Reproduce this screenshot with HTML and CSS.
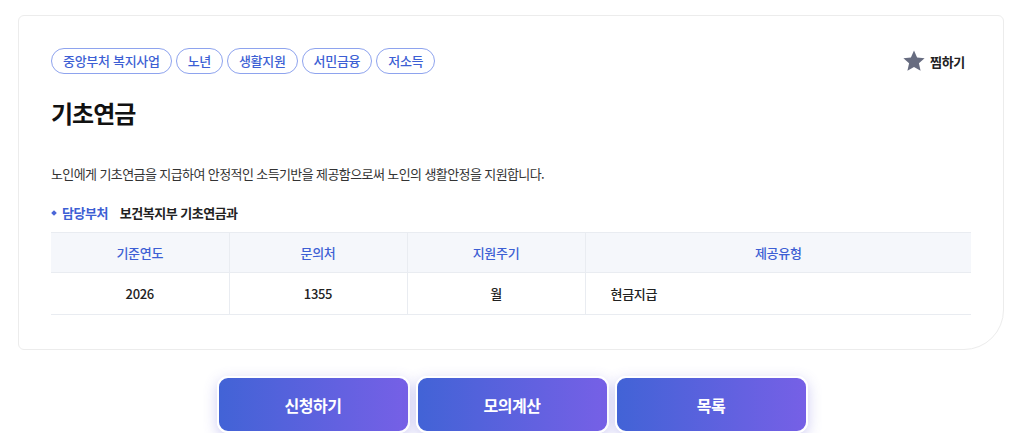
FILE: index.html
```html
<!DOCTYPE html>
<html lang="ko">
<head>
    <meta charset="UTF-8">
    <meta name="viewport" content="width=device-width, initial-scale=1.0">
    <title>기초연금</title>
    <link rel="stylesheet" href="styles.css">
</head>
<body>
    <div class="container">
        <div class="detail-card">
            <div class="card-top">
                <div class="tags">
                    <span class="tag">중앙부처 복지사업</span>
                    <span class="tag">노년</span>
                    <span class="tag">생활지원</span>
                    <span class="tag">서민금융</span>
                    <span class="tag">저소득</span>
                </div>
                <button class="fav-btn">
                    <svg class="star" viewBox="0 0 24 24" width="24" height="24">
                        <path d="M12 1.5l3.1 7 7.5.7-5.7 5 1.7 7.5L12 17.9l-6.6 3.8 1.7-7.5-5.7-5 7.5-.7z" fill="#676c80"/>
                    </svg>
                    찜하기
                </button>
            </div>

            <h1 class="title">기초연금</h1>

            <p class="desc">노인에게 기초연금을 지급하여 안정적인 소득기반을 제공함으로써 노인의 생활안정을 지원합니다.</p>

            <div class="dept">
                <span class="dept-label">담당부처</span>
                <span class="dept-value">보건복지부 기초연금과</span>
            </div>

            <table class="info-table">
                <thead>
                    <tr>
                        <th class="col-sm">기준연도</th>
                        <th class="col-sm">문의처</th>
                        <th class="col-sm">지원주기</th>
                        <th>제공유형</th>
                    </tr>
                </thead>
                <tbody>
                    <tr>
                        <td>2026</td>
                        <td>1355</td>
                        <td>월</td>
                        <td class="left">현금지급</td>
                    </tr>
                </tbody>
            </table>
        </div>

        <div class="actions">
            <button class="action-btn">신청하기</button>
            <button class="action-btn">모의계산</button>
            <button class="action-btn">목록</button>
        </div>
    </div>
</body>
</html>
```

FILE: styles.css
```css
* {
    margin: 0;
    padding: 0;
    box-sizing: border-box;
}

body {
    font-family: "Noto Sans CJK KR", "Noto Sans", sans-serif;
    background: #ffffff;
    color: #222;
}

.container {
    padding: 15px 20px 0 18px;
}

.detail-card {
    background: #fff;
    border: 1px solid #ececec;
    border-radius: 6px 6px 40px 6px;
    padding: 32px 32px 34px 32px;
}

.card-top {
    display: flex;
    justify-content: space-between;
    align-items: center;
}

.tags {
    display: flex;
    gap: 4px;
}

.tag {
    display: inline-block;
    height: 26px;
    line-height: 24px;
    padding: 0 11px;
    border: 1px solid #8ea3ee;
    border-radius: 13px;
    color: #3d5fd4;
    font-size: 13px;
    font-weight: 500;
    letter-spacing: -0.3px;
}

.fav-btn {
    display: flex;
    align-items: center;
    gap: 4px;
    background: none;
    border: none;
    font-family: inherit;
    font-size: 13px;
    font-weight: 700;
    color: #222;
    margin-right: 6px;
    letter-spacing: -0.3px;
    cursor: pointer;
}

.title {
    font-size: 24px;
    font-weight: 700;
    color: #111;
    line-height: 36px;
    margin-top: 21px;
    letter-spacing: -1px;
}

.desc {
    font-size: 13px;
    color: #333;
    line-height: 20px;
    margin-top: 33px;
    letter-spacing: -0.6px;
}

.dept {
    display: flex;
    align-items: center;
    margin-top: 19px;
    font-size: 13px;
    font-weight: 700;
    line-height: 20px;
    letter-spacing: -0.5px;
}

.dept-label {
    position: relative;
    color: #3d5fd4;
    padding-left: 11px;
    margin-right: 12px;
}

.dept-label::before {
    content: "";
    position: absolute;
    left: 1px;
    top: 8px;
    width: 4px;
    height: 4px;
    background: #4a66d8;
    transform: rotate(45deg);
}

.dept-value {
    color: #222;
}

.info-table {
    width: 100%;
    border-collapse: collapse;
    margin-top: 9px;
    font-size: 13px;
    letter-spacing: -0.3px;
}

.info-table th,
.info-table td {
    border-top: 1px solid #e9ecf1;
    border-bottom: 1px solid #e9ecf1;
    border-left: 1px solid #e9ecf1;
    text-align: center;
}

.info-table th:first-child,
.info-table td:first-child {
    border-left: none;
}

.info-table th {
    background: #f5f7fb;
    color: #3d5fd4;
    font-weight: 500;
    height: 40px;
}

.col-sm {
    width: 178px;
}

.info-table td {
    height: 42px;
    font-weight: 500;
    color: #222;
}

.info-table td.left {
    text-align: left;
    padding-left: 25px;
}

.actions {
    display: flex;
    justify-content: center;
    gap: 6px;
    margin-top: 26px;
    padding-left: 2px;
}

.action-btn {
    width: 193px;
    height: 57px;
    border: 2px solid #fff;
    border-radius: 11px;
    background: linear-gradient(90deg, #4263d6 0%, #7660e6 100%);
    color: #fff;
    font-family: inherit;
    font-size: 16px;
    font-weight: 700;
    letter-spacing: -0.5px;
    box-shadow: 0 4px 14px rgba(95, 90, 215, 0.3);
    cursor: pointer;
}
```
